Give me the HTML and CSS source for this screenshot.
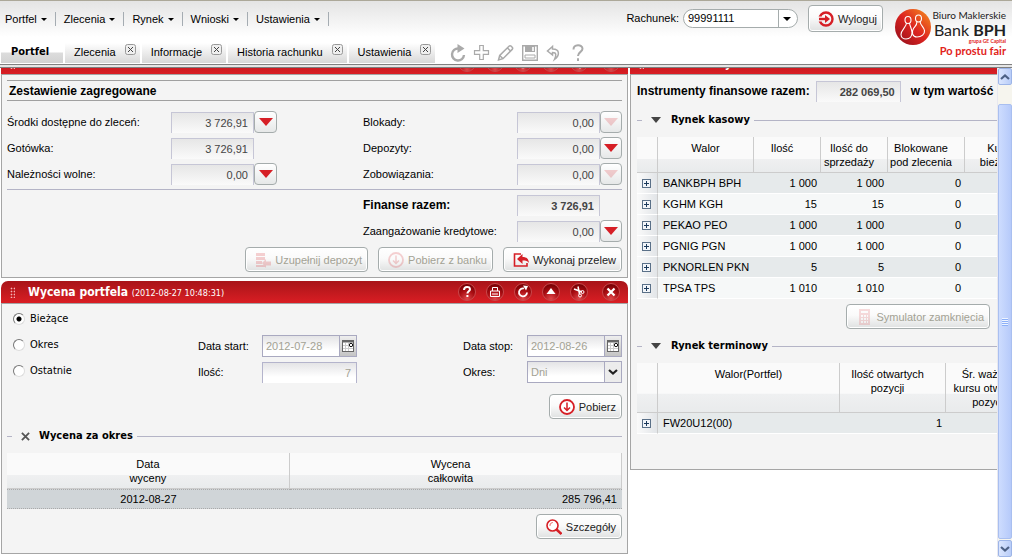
FILE: index.html
```html
<!DOCTYPE html>
<html lang="pl">
<head>
<meta charset="utf-8">
<title>Portfel</title>
<link rel="stylesheet" href="styles.css">
</head>
<body>
<svg class="defs" aria-hidden="true">
  <defs>
    <radialGradient id="ball" cx="50%" cy="90%" r="80%"><stop offset="0" stop-color="#e0474a"/><stop offset="0.6" stop-color="#a90d12"/><stop offset="1" stop-color="#7d0206"/></radialGradient>
    <linearGradient id="logo" x1="0" y1="1" x2="1" y2="0"><stop offset="0" stop-color="#8c0d1c"/><stop offset="0.5" stop-color="#dd2420"/><stop offset="1" stop-color="#f7941d"/></linearGradient>
    <symbol id="b-help" viewBox="0 0 18 18"><circle cx="9" cy="9" r="8.5" fill="url(#ball)" stroke="#c94a4d"/><path d="M6 7c0-4 6-4 6-.8 0 2-2.6 2-2.6 4.3M9.400 12v2" fill="none" stroke="#fff" stroke-width="2"/></symbol>
    <symbol id="b-print" viewBox="0 0 18 18"><circle cx="9" cy="9" r="8.5" fill="url(#ball)" stroke="#c94a4d"/><path d="M6.5 8V4.5h5V8M4.500 8h9v5.500h-9zM6 11h6" fill="none" stroke="#fff"/></symbol>
    <symbol id="b-reload" viewBox="0 0 18 18"><circle cx="9" cy="9" r="8.5" fill="url(#ball)" stroke="#c94a4d"/><path d="M10 5.500a4 4 0 1 0 3 4" fill="none" stroke="#fff" stroke-width="1.800"/><path d="M9 2.500l5 .5-2 4.500z" fill="#fff"/></symbol>
    <symbol id="b-up" viewBox="0 0 18 18"><circle cx="9" cy="9" r="8.5" fill="url(#ball)" stroke="#c94a4d"/><path d="M9 5l4.500 6h-9z" fill="#fff"/></symbol>
    <symbol id="b-cut" viewBox="0 0 18 18"><circle cx="9" cy="9" r="8.5" fill="url(#ball)" stroke="#c94a4d"/><path d="M4 6l8 3M8 3.500l1.500 7.500" stroke="#fff" stroke-width="1.500"/><circle cx="12.500" cy="9" r="1.500" fill="none" stroke="#fff"/><circle cx="10" cy="12.500" r="1.500" fill="none" stroke="#fff"/></symbol>
    <symbol id="b-close" viewBox="0 0 18 18"><circle cx="9" cy="9" r="8.500" fill="url(#ball)" stroke="#c94a4d"/><path d="M5.500 5.500l7 7M12.500 5.500l-7 7" stroke="#fff" stroke-width="2.200"/></symbol>
    <symbol id="tri" viewBox="0 0 14 8"><path d="M0 0h14L7 8z" fill="#d61f26"/></symbol>
    <symbol id="tabx" viewBox="0 0 11 11"><rect x=".5" y=".5" width="10" height="10" rx="2" fill="#efefef" stroke="#999"/><path d="M3 3l5 5M8 3l-5 5" stroke="#444"/></symbol>
    <symbol id="plus" viewBox="0 0 9 9"><rect x=".5" y=".5" width="8" height="8" fill="#f2f5f9" stroke="#5a7088"/><path d="M2 4.500h5M4.500 2v5" stroke="#1c3a5c"/></symbol>
    <symbol id="get" viewBox="0 0 16 16"><circle cx="8" cy="8" r="7" fill="#fff" stroke="#d61f26" stroke-width="1.800"/><path d="M8 3.500v8M5 8.500l3 3 3-3" fill="none" stroke="#d61f26" stroke-width="1.500"/></symbol>
    <symbol id="cal" viewBox="0 0 12 12"><rect x=".5" y=".5" width="11" height="11" fill="#fff" stroke="#666"/><path d="M0 1.500h12" stroke="#666" stroke-width="2"/><path d="M1 5.500h10M1 8.500h10M3.500 3v8M6.500 3v8" stroke="#ccc"/><circle cx="9" cy="5" r="1.700" fill="#fff" stroke="#111"/></symbol>
  </defs>
</svg>

<header class="top">
  <div class="top-left">
    <nav class="menu">
      <button type="button">Portfel<i class="caret"></i></button>
      <button type="button">Zlecenia<i class="caret"></i></button>
      <button type="button">Rynek<i class="caret"></i></button>
      <button type="button">Wnioski<i class="caret"></i></button>
      <button type="button">Ustawienia<i class="caret"></i></button>
    </nav>
    <div class="tabbar">
      <div class="tab active"><a href="#portfel">Portfel</a></div>
      <div class="tab"><a href="#zlecenia">Zlecenia</a><button type="button" aria-label="Zamknij"><svg><use href="#tabx"/></svg></button></div>
      <div class="tab"><a href="#informacje">Informacje</a><button type="button" aria-label="Zamknij"><svg><use href="#tabx"/></svg></button></div>
      <div class="tab"><a href="#historia">Historia rachunku</a><button type="button" aria-label="Zamknij"><svg><use href="#tabx"/></svg></button></div>
      <div class="tab"><a href="#ustawienia">Ustawienia</a><button type="button" aria-label="Zamknij"><svg><use href="#tabx"/></svg></button></div>
      <div class="tools">
        <button type="button" aria-label="Odśwież"><svg viewBox="0 0 18 18"><path d="M9.500 4.500a6 6 0 1 0 5.500 6.500" fill="none" stroke="#aaa" stroke-width="2.400"/><path d="M8.500 0l7 4.500-7 4.500z" fill="#aaa"/></svg></button>
        <button type="button" aria-label="Dodaj"><svg viewBox="0 0 18 18"><path d="M6.700 1.500h3.600v5.200h5.200v3.600h-5.200v5.200H6.700v-5.200H1.500V6.700h5.200z" fill="#fff" stroke="#aaa" stroke-width="1.200"/></svg></button>
        <button type="button" aria-label="Edytuj"><svg viewBox="0 0 18 18"><path d="M1.500 16l1.200-4.500L12 2.200q1-1 2.200 0l1 1q1 1.100 0 2.200L6 14.700zM10.500 4l3 3M2.700 11.500L6 14.700" fill="none" stroke="#aaa" stroke-width="1.500"/></svg></button>
        <button type="button" aria-label="Zapisz"><svg viewBox="0 0 18 18"><path d="M1.700 1.700h14.600v14.600H1.700z" fill="#fff" stroke="#aaa" stroke-width="1.400"/><path d="M4 2h10v6H4z" fill="#aaa"/><path d="M11 3h2v4h-2z" fill="#eee"/><path d="M4 11h10v3H4z" fill="#fff" stroke="#aaa"/></svg></button>
        <button type="button" aria-label="Cofnij"><svg viewBox="0 0 18 18"><path d="M7.500 2.500l-5 4.500 5 4V8.500c4 0 4 2.500 2 7 5-3.500 6-10.500-2-10.500z" fill="#fff" stroke="#aaa" stroke-width="1.500"/></svg></button>
        <button type="button" aria-label="Pomoc"><svg viewBox="0 0 18 18"><path d="M4.500 5.500c0-5.500 9-5.500 9-.7 0 3.200-4.500 3-4.500 7.200M9 14.300v2.700" fill="none" stroke="#aaa" stroke-width="2"/></svg></button>
      </div>
    </div>
  </div>
  <div class="top-right">
    <label for="acc">Rachunek:</label>
    <div class="combo">
      <select id="acc"><option>99991111</option></select>
      <i class="caret"></i>
    </div>
    <button type="button" class="btn logout"><svg viewBox="0 0 16 16"><circle cx="8" cy="8" r="6.500" fill="none" stroke="#d61f26" stroke-width="2.400"/><path d="M0 5.500h3v5H0z" fill="#f4f4f4"/><path d="M1 8h7" stroke="#d61f26" stroke-width="2.400"/><path d="M7 4l5 4-5 4z" fill="#d61f26"/></svg>Wyloguj</button>
    <div class="brand">
      <svg class="mark" viewBox="0 0 36 36"><circle cx="18" cy="18" r="18" fill="url(#logo)"/><g fill="none" stroke="#fff" stroke-width="1.100"><ellipse cx="13" cy="11" rx="3" ry="3.500"/><path d="M11.500 14c0 4-5.500 7-5.500 11.500 0 3 2.500 4.500 5 4.500 4 0 6-3 6-6.500 0-3.500-2-6-2.500-9.500"/><ellipse cx="23.500" cy="9.500" rx="3" ry="3.500"/><path d="M22 12.500c0 4-2 5-3.500 7-2.500 4-1 8.500 3.500 8.500s8-3 7.500-6.500-4-5-4.500-9"/></g></svg>
      <div class="brand-text">
        <span class="b1">Biuro Maklerskie</span>
        <span class="b2">Bank <b>BPH</b></span>
        <span class="b3">grupa GE Capital</span>
        <span class="b4">Po prostu fair</span>
      </div>
    </div>
  </div>
</header>

<main class="desk">
  <div class="col">
    <section class="panel scrolled">
      <div class="phead">
        <i class="grip"></i><h2>Finanse rachunku <small>(2012-08-27 10:48:31)</small></h2>
        <div class="pbtns"><svg><use href="#b-help"/></svg><svg><use href="#b-print"/></svg><svg><use href="#b-reload"/></svg><svg><use href="#b-up"/></svg><svg><use href="#b-cut"/></svg><svg class="last"><use href="#b-close"/></svg></div>
      </div>
      <div class="pbody finance">
        <h3 class="ruled">Zestawienie zagregowane</h3>
        <div class="form">
          <label for="f1">Środki dostępne do zleceń:</label>
          <div class="fld"><input id="f1" readonly value="3 726,91"><button type="button" aria-label="Rozwiń"><svg><use href="#tri"/></svg></button></div>
          <label class="second" for="f2">Blokady:</label>
          <div class="fld"><input id="f2" readonly value="0,00"><button type="button" disabled aria-label="Rozwiń"><svg><use href="#tri"/></svg></button></div>
          <label for="f3">Gotówka:</label>
          <div class="fld"><input id="f3" readonly value="3 726,91"></div>
          <label class="second" for="f4">Depozyty:</label>
          <div class="fld"><input id="f4" readonly value="0,00"><button type="button" aria-label="Rozwiń"><svg><use href="#tri"/></svg></button></div>
          <label for="f5">Należności wolne:</label>
          <div class="fld"><input id="f5" readonly value="0,00"><button type="button" aria-label="Rozwiń"><svg><use href="#tri"/></svg></button></div>
          <label class="second" for="f6">Zobowiązania:</label>
          <div class="fld"><input id="f6" readonly value="0,00"><button type="button" disabled aria-label="Rozwiń"><svg><use href="#tri"/></svg></button></div>
        </div>
        <div class="form totals">
          <label class="second strong" for="f7">Finanse razem:</label>
          <div class="fld"><input id="f7" class="strong-val" readonly value="3 726,91"></div>
          <label class="second" for="f8">Zaangażowanie kredytowe:</label>
          <div class="fld"><input id="f8" readonly value="0,00"><button type="button" aria-label="Rozwiń"><svg><use href="#tri"/></svg></button></div>
        </div>
        <div class="actions">
          <button type="button" class="btn" disabled><svg viewBox="0 0 16 16"><path d="M1 1h9v3H1zM1 5h9v3H1zM1 9h6v3H1zM1 13h9v2H1zM7 11l4-4v2.500h5v4h-5V16z" fill="#d61f26"/></svg>Uzupełnij depozyt</button>
          <button type="button" class="btn" disabled><svg><use href="#get"/></svg>Pobierz z banku</button>
          <button type="button" class="btn"><svg viewBox="0 0 16 16"><path d="M8 2H1.500v12H14v-3" fill="none" stroke="#d61f26" stroke-width="1.600"/><path d="M4 7L9.500 2v3c4.500 0 6 2 6.500 6-1.500-2-3-2.500-6.500-2.500V12z" fill="#d61f26"/></svg>Wykonaj przelew</button>
        </div>
      </div>
    </section>

    <section class="panel">
      <div class="phead">
        <i class="grip"></i><h2>Wycena portfela <small>(2012-08-27 10:48:31)</small></h2>
        <div class="pbtns">
          <button type="button" aria-label="Pomoc"><svg><use href="#b-help"/></svg></button>
          <button type="button" aria-label="Drukuj"><svg><use href="#b-print"/></svg></button>
          <button type="button" aria-label="Odśwież"><svg><use href="#b-reload"/></svg></button>
          <button type="button" aria-label="Zwiń"><svg><use href="#b-up"/></svg></button>
          <button type="button" aria-label="Odepnij"><svg><use href="#b-cut"/></svg></button>
          <button type="button" class="last" aria-label="Zamknij"><svg><use href="#b-close"/></svg></button>
        </div>
      </div>
      <div class="pbody valuation">
        <div class="period">
          <label class="radio wide"><input type="radio" name="p" checked>Bieżące</label>
          <label class="radio"><input type="radio" name="p">Okres</label>
          <label class="cap" for="d1">Data start:</label>
          <div class="date"><input id="d1" disabled value="2012-07-28"><button type="button" aria-label="Kalendarz"><svg><use href="#cal"/></svg></button></div>
          <label class="cap stop" for="d2">Data stop:</label>
          <div class="date"><input id="d2" disabled value="2012-08-26"><button type="button" aria-label="Kalendarz"><svg><use href="#cal"/></svg></button></div>
          <label class="radio"><input type="radio" name="p">Ostatnie</label>
          <label class="cap" for="d3">Ilość:</label>
          <input id="d3" class="qty" disabled value="7">
          <label class="cap stop" for="d4">Okres:</label>
          <div class="date"><select id="d4" disabled><option>Dni</option></select><span class="drop"><svg viewBox="0 0 10 6"><path d="M1 1l4 3.500L9 1" fill="none" stroke="#222" stroke-width="2.200"/></svg></span></div>
        </div>
        <div class="actions fetch"><button type="button" class="btn"><svg><use href="#get"/></svg>Pobierz</button></div>
        <h3 class="legend"><svg viewBox="0 0 10 10"><path d="M1 1l8 8M9 1L1 9" stroke="#555" stroke-width="2"/></svg>Wycena za okres</h3>
        <table class="result">
          <colgroup><col class="r1"><col></colgroup>
          <thead><tr><th>Data<br>wyceny</th><th>Wycena<br>całkowita</th></tr></thead>
          <tbody><tr><td class="mid">2012-08-27</td><td class="num">285 796,41</td></tr></tbody>
        </table>
        <div class="actions details"><button type="button" class="btn"><svg viewBox="0 0 16 16"><circle cx="6.500" cy="6.500" r="5.500" fill="#fff" stroke="#d61f26" stroke-width="1.600"/><path d="M4 7a3 3 0 0 1 3-3.500" fill="none" stroke="#e88" stroke-width="1.200"/><path d="M10.500 10.500l5 4.500" stroke="#d61f26" stroke-width="2.600"/></svg>Szczegóły</button></div>
      </div>
    </section>
  </div>

  <div class="col right">
    <section class="panel scrolled">
      <div class="phead"><i class="grip"></i><h2>Instrumenty finansowe <small>(2012-08-27 10:48:31)</small></h2></div>
      <div class="pbody market">
        <div class="sum"><label class="strong" for="s1">Instrumenty finansowe razem:</label><input id="s1" class="strong-val" readonly value="282 069,50"><span class="strong">w tym wartość</span></div>
        <h3 class="legend"><i class="fold"></i>Rynek kasowy</h3>
        <table class="grid cash">
          <colgroup><col class="c0"><col class="c1"><col class="c2"><col class="c2"><col class="c3"><col class="c4"></colgroup>
          <thead><tr><th></th><th class="name">Walor</th><th>Ilość</th><th>Ilość do<br>sprzedaży</th><th>Blokowane<br>pod zlecenia</th><th>Kurs<br>bieżący</th></tr></thead>
          <tbody>
            <tr><td><button type="button" aria-label="Rozwiń"><svg><use href="#plus"/></svg></button></td><td>BANKBPH BPH</td><td>1 000</td><td>1 000</td><td>0</td><td></td></tr>
            <tr><td><button type="button" aria-label="Rozwiń"><svg><use href="#plus"/></svg></button></td><td>KGHM KGH</td><td>15</td><td>15</td><td>0</td><td></td></tr>
            <tr><td><button type="button" aria-label="Rozwiń"><svg><use href="#plus"/></svg></button></td><td>PEKAO PEO</td><td>1 000</td><td>1 000</td><td>0</td><td></td></tr>
            <tr><td><button type="button" aria-label="Rozwiń"><svg><use href="#plus"/></svg></button></td><td>PGNIG PGN</td><td>1 000</td><td>1 000</td><td>0</td><td></td></tr>
            <tr><td><button type="button" aria-label="Rozwiń"><svg><use href="#plus"/></svg></button></td><td>PKNORLEN PKN</td><td>5</td><td>5</td><td>0</td><td></td></tr>
            <tr><td><button type="button" aria-label="Rozwiń"><svg><use href="#plus"/></svg></button></td><td>TPSA TPS</td><td>1 010</td><td>1 010</td><td>0</td><td></td></tr>
          </tbody>
        </table>
        <div class="actions simulate"><button type="button" class="btn" disabled><svg viewBox="0 0 16 16"><path d="M3 0h11v16H3z" fill="#e0575b"/><path d="M5 2h7v2H5zM5 6h2v2H5zM8 6h2v2H8zM11 6h1v2h-1zM5 9h2v2H5zM8 9h2v2H8zM11 9h1v2h-1zM5 12h2v2H5zM8 12h2v2H8zM11 12h1v2h-1z" fill="#fff"/></svg>Symulator zamknięcia</button></div>
        <h3 class="legend"><i class="fold"></i>Rynek terminowy</h3>
        <table class="grid futures">
          <colgroup><col class="c0"><col class="t1"><col class="t2"><col class="t3"></colgroup>
          <thead><tr><th></th><th class="name">Walor(Portfel)</th><th>Ilość otwartych<br>pozycji</th><th>Śr. ważona<br>kursu otwarcia<br>pozycji</th></tr></thead>
          <tbody><tr><td><button type="button" aria-label="Rozwiń"><svg><use href="#plus"/></svg></button></td><td>FW20U12(00)</td><td>1</td><td></td></tr></tbody>
        </table>
      </div>
    </section>
  </div>

  <div class="scroll" aria-hidden="true">
    <span class="sbtn"><svg viewBox="0 0 10 6"><path d="M1 5l4-3.500L9 5" fill="none" stroke="#4d6185" stroke-width="2.200"/></svg></span>
    <span class="thumb"><i></i></span>
    <span class="sbtn"><svg viewBox="0 0 10 6"><path d="M1 1l4 3.500L9 1" fill="none" stroke="#4d6185" stroke-width="2.200"/></svg></span>
  </div>
</main>
</body>
</html>
```

FILE: styles.css
```css
* { box-sizing: border-box; }

body {
  margin: 0;
  height: 100vh;
  display: flex;
  flex-direction: column;
  overflow: hidden;
  background: #fff;
  color: #000;
  font: 11px/14px "Liberation Sans", Arial, sans-serif;
}

button, input, select { font: inherit; color: inherit; }
button { padding: 0; border: 0; background: none; }
h2, h3 { margin: 0; }
svg { display: block; flex: none; }
.defs { position: absolute; width: 0; height: 0; }

/* Header */
.top {
  flex: none;
  display: flex;
  justify-content: space-between;
  height: 68px;
  border-top: 1px solid #aca899;
  border-bottom: 4px double #808080;
  background: linear-gradient(#e4e4e4, #fff 36px);
}
.top-left { display: flex; flex-direction: column; justify-content: space-between; }
.menu { display: flex; padding-top: 11px; padding-left: 5px; }
.menu button {
  display: flex;
  align-items: center;
  gap: 4px;
  height: 14px;
  padding-right: 8px;
  margin-right: 8px;
  border-right: 1px solid #a5acb2;
}
.caret { width: 0; height: 0; border: 3px solid transparent; border-top-color: #000; border-bottom: 0; }

.tabbar { display: flex; gap: 2px; padding-left: 1px; padding-bottom: 1px; }
.tab {
  display: flex;
  gap: 9px;
  height: 20px;
  padding: 0 4px 0 9px;
  background: linear-gradient(#fff, #d8d8d8);
  line-height: 19px;
}
.tab a { color: inherit; text-decoration: none; }
.tab button, .tab svg { width: 11px; height: 11px; }
.tab button { margin-top: 1px; }
.tab.active { padding: 0 14px 0 10px; font: bold 11px/18px "DejaVu Sans Condensed", "DejaVu Sans", sans-serif; background: linear-gradient(#fff 45%, #dcdcdc 50%, #d2d2d2); }
.tools { display: flex; gap: 6px; padding-left: 12px; }
.tools svg { width: 18px; height: 18px; }

.top-right { display: flex; align-items: flex-start; padding-right: 6px; }
.top-right label { padding-top: 10px; }
.combo { position: relative; width: 115px; margin: 8px 10px 0 4px; }
.combo select {
  appearance: none;
  display: block;
  width: 100%;
  height: 19px;
  padding: 0 0 2px 4px;
  border: 1px solid #a5acac;
  border-radius: 10px;
  background: linear-gradient(90deg, #fff 94px, #a5acac 94px, #a5acac 95px, #fff 95px);
}
.combo .caret { position: absolute; right: 7px; top: 8px; border-width: 4px 4px 0; }

.btn {
  display: flex;
  align-items: center;
  gap: 4px;
  height: 25px;
  padding: 0 5px 0 9px;
  border: 1px solid #a5acac;
  border-radius: 4px;
  background: linear-gradient(#fff, #fafafa 45%, #dfe1e1);
  box-shadow: inset 0 0 0 1px #fff;
  color: #222;
  white-space: nowrap;
}
.btn svg { width: 16px; height: 16px; }
.btn:disabled { color: #a3a294; }
.btn:disabled svg { opacity: 0.2; }
.logout { height: 27px; margin-top: 4px; }

.brand { display: flex; gap: 5px; margin-left: 12px; padding-top: 8px; }
.mark { width: 36px; height: 36px; }
.brand-text { display: flex; flex-direction: column; align-items: flex-end; width: 70px; color: #222; font-family: Lato, sans-serif; white-space: nowrap; }
.b1 { font-size: 10px; line-height: 13px; }
.b2 { font-size: 16px; line-height: 16px; }
.b3 { color: #e2231a; font-size: 5px; line-height: 6px; font-weight: bold; }
.b4 { color: #e2231a; font-size: 11px; line-height: 14px; font-weight: bold; }

/* Panels */
.desk {
  flex: 1;
  min-height: 0;
  display: grid;
  grid-template-columns: minmax(0, 628fr) minmax(0, 369fr) 15px;
  overflow: hidden;
}
.col { display: flex; flex-direction: column; gap: 3px; min-width: 0; padding-left: 1px; }
.right { padding-left: 2px; overflow: hidden; }
.scrolled { margin-top: -16px; }
.phead {
  display: flex;
  align-items: center;
  height: 22px;
  padding: 0 8px 0 9px;
  border-radius: 7px 7px 0 0;
  background: linear-gradient(#a81419, #da1e24);
  color: #fff;
}
.grip { width: 5px; height: 11px; margin-right: 13px; background: radial-gradient(circle, #f3b5b7 40%, transparent 50%) 0 0 / 3px 3px; }
.phead h2 { flex: 1; font: bold 12px/14px "DejaVu Sans Condensed", "DejaVu Sans", sans-serif; white-space: nowrap; }
.phead small { font-size: 9px; font-weight: normal; }
.right .phead h2 { flex: none; }
.pbtns { display: flex; gap: 10px; }
.pbtns svg { width: 18px; height: 18px; }
.pbtns .last { margin-left: 4px; }
.pbody { border: 1px solid #a5a5a5; background: #f4f4f4; }
.right .pbody { border-right: 0; }

.strong, .ruled { font-weight: bold; font-size: 12px; }
.ruled { height: 21px; padding-left: 2px; line-height: 20px; border-top: 1px solid #a0a0a0; border-bottom: 1px solid #a0a0a0; }

.finance { padding: 5px; }
.form {
  display: grid;
  grid-template-columns: 164px 106px 1fr 154px 105px;
  grid-auto-rows: 26px;
  align-items: center;
  padding: 8px 0 2px;
}
.form .second { grid-column: 4; }
.totals { padding: 2px 0 3px; border-top: 1px solid #b4b4c6; }
.fld { display: flex; align-items: center; }
.fld input, .sum input, .qty {
  width: 83px;
  height: 21px;
  padding: 0 5px;
  border: 1px solid #c6c6d6;
  border-bottom: 0;
  background: linear-gradient(#e6e6e6, #fafafa);
  color: #444;
  text-align: right;
}
.fld button {
  display: grid;
  place-items: center;
  width: 23px;
  height: 22px;
  border: 1px solid #a5acac;
  border-radius: 4px;
  background: linear-gradient(#fff, #e6e8e8);
}
.fld button svg { width: 14px; height: 8px; }
.fld button:disabled svg { opacity: 0.2; }
.fld input.strong-val, .sum input { font-weight: bold; }

.actions { display: flex; justify-content: flex-end; gap: 10px; }

.valuation { padding: 1px 5px 14px; }
.period {
  display: grid;
  grid-template-columns: 191px 64px 95px 1fr 64px 95px;
  grid-auto-rows: 26px;
  align-items: end;
}
.wide { grid-column: 1 / -1; }
.radio { display: flex; align-items: center; gap: 5px; height: 26px; padding: 2px 0 0 6px; font-family: "DejaVu Sans Condensed", "DejaVu Sans", sans-serif; }
.radio input {
  appearance: none;
  width: 12px;
  height: 12px;
  margin: 0;
  border: 1px solid;
  border-color: #777 #ddd #ddd #777;
  border-radius: 50%;
  background: #fff;
}
.radio input:checked { background: radial-gradient(circle, #000 2px, #fff 3px); }
.cap { line-height: 21px; }
.stop { grid-column: 5; }
.date { display: flex; height: 22px; border: 1px solid #a9a9c0; background: linear-gradient(#e4e4e6, #fff 70%); }
.date input, .date select { appearance: none; flex: 1; min-width: 0; padding: 1px 3px; border: 0; background: none; color: #a3a294; opacity: 1; }
.date button, .drop { display: grid; place-items: center; width: 17px; border-left: 1px solid #a9a9c0; background: linear-gradient(#eee, #c4c4c4); }
.drop { background: #ececec; }
.date svg { width: 12px; height: 12px; }
.date .drop svg { width: 10px; height: 6px; }
.qty { width: 95px; border-color: #b4b4cc; background: linear-gradient(#e4e4e6, #fff 70%); color: #a3a294; }
.fetch { margin-top: 11px; }

.legend {
  display: flex;
  align-items: center;
  height: 20px;
  margin: 7px 0;
  font: bold 11px/20px "DejaVu Sans Condensed", "DejaVu Sans", sans-serif;
  white-space: nowrap;
}
.legend::before { content: ""; width: 5px; height: 1px; margin-right: 9px; background: #b4b4c6; }
.legend::after { content: ""; flex: 1; height: 1px; margin-left: 4px; background: #b4b4c6; }
.legend svg { width: 9px; height: 9px; margin-right: 9px; }
.fold { width: 0; height: 0; margin-right: 10px; border: 5px solid transparent; border-top: 6px solid #444; border-bottom: 0; }

table { table-layout: fixed; border-collapse: separate; border-spacing: 0; }
th {
  padding: 4px 10px 2px 0;
  border-right: 1px solid #ccc;
  border-bottom: 1px solid #ccc;
  background: linear-gradient(#fafafa 62%, #eff0f1 63%, #e9ebec);
  font-weight: normal;
  text-align: center;
  vertical-align: top;
  white-space: nowrap;
}
th.name, .result th:first-child, .grid th:last-child { padding-right: 0; }
td { padding: 0 4px; white-space: nowrap; }
.result { width: 100%; }
.r1 { width: 46%; }
.result th { height: 36px; }
.result td { height: 20px; background: #d0d5d8; border: 1px dotted #aaa; border-width: 1px 0; }
.mid { text-align: center; }
td.num { padding-right: 5px; text-align: right; }
.details { margin-top: 5px; }

.market { padding: 6px 0 35px 6px; }
.sum { display: flex; height: 22px; line-height: 20px; white-space: nowrap; }
.sum input { width: 85px; margin: 0 10px 0 6px; }
.grid { width: 396px; }
.c0 { width: 21px; }
.c1 { width: 96px; }
.c2 { width: 67px; }
.c3 { width: 77px; }
.c4 { width: 68px; }
.t1 { width: 182px; }
.t2 { width: 106px; }
.t3 { width: 87px; }
.cash th { height: 36px; }
.futures th { height: 50px; }
.grid td { height: 21px; border-bottom: 1px solid #fff; background: #f6f8f8; text-align: right; }
.grid tbody tr:nth-child(odd) td { background: #e6eaeb; }
.grid tbody tr td:first-child { padding: 0 0 0 5px; border-right: 1px solid #ccc; background: linear-gradient(90deg, #fafafa, #e2e5e8); }
.grid td:nth-child(2) { padding-left: 5px; text-align: left; }
.grid td button, .grid td svg { display: block; width: 9px; height: 9px; }
.simulate { margin-top: 5px; padding-right: 7px; }

/* Vertical scroll bar */
.scroll { display: flex; flex-direction: column; border-left: 1px solid #e8e8f0; background: #f6f5ee; }
.sbtn { display: grid; place-items: center; height: 17px; border: 1px solid #9db5e8; border-radius: 2px; background: linear-gradient(90deg, #dbe6fe, #b9cdf8); }
.sbtn svg { width: 10px; height: 6px; }
.thumb { flex: 1; display: grid; place-items: center; margin: 19px 0 1px; border: 1px solid #a9bff0; border-radius: 2px; background: linear-gradient(90deg, #cddcfe, #b6cafa); }
.thumb i { width: 6px; height: 8px; background: repeating-linear-gradient(#eef4ff 0 1px, #8cb0f8 1px 2px); }
```
